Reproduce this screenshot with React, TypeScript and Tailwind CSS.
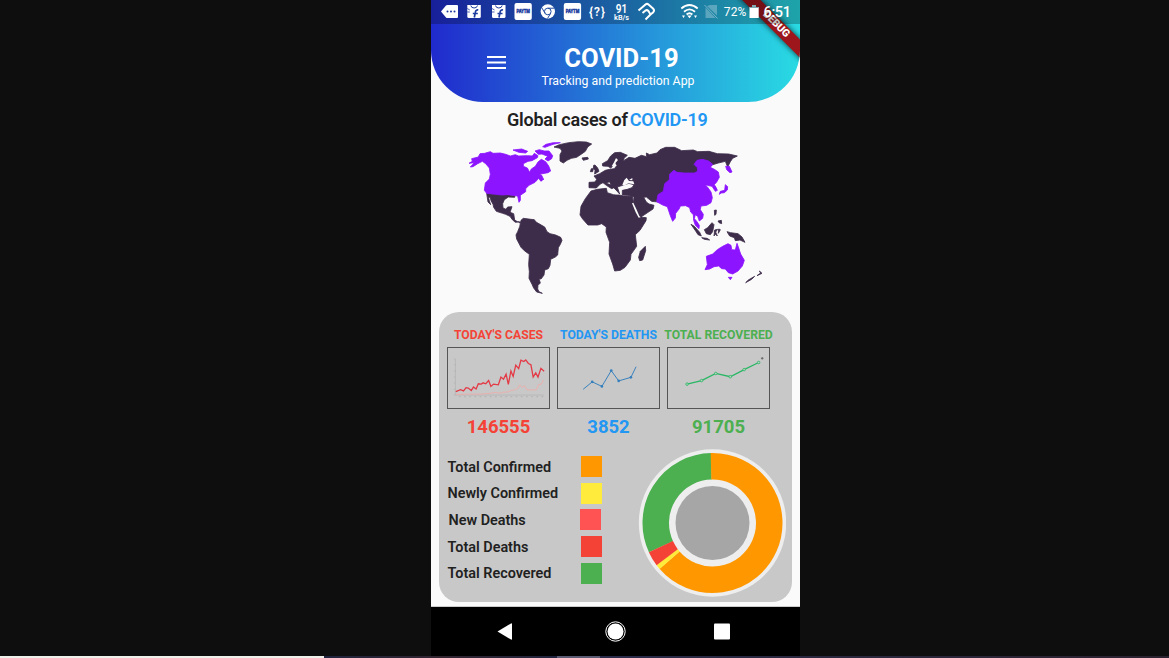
import React from "react";

const DARK = "#3d2c4a";
const PURPLE = "#8c14ff";

function StatusBar() {
  return (
    <div className="relative h-6 bg-black/25">
      <svg className="block h-6 w-[369px]" viewBox="431 0 369 24" fill="#fff">
        <path d="M441 11.500 446 5.500Q446.500 5 447.500 5H457Q458 5 458 6V17Q458 18 457 18H447.500Q446.500 18 446 17.500Z" />
        <g fill="#1d389c">
          <circle cx="447.500" cy="11.500" r="1" />
          <circle cx="451" cy="11.500" r="1" />
          <circle cx="454.500" cy="11.500" r="1" />
        </g>
        {[467.3, 492].map((x) => (
          <g key={x} transform={`translate(${x} 4)`}>
            <path d="M0 1H13.500V12.500Q13.500 14 12 14H1.500Q0 14 0 12.500Z" />
            <path d="M3.500 1.500Q4 4 6.800 4Q9.700 4 10.200 1.500" fill="none" stroke="#1d3c9d" strokeWidth="1" />
            <path d="M11 6Q8.500 5.500 8 8.500L7 13.500M5.500 9.500H10.500" fill="none" stroke="#1d3c9d" strokeWidth="1.700" />
            <path d="M0 4.500 2.500 6M0 8 2.500 8" stroke="#1d3c9d" strokeWidth=".8" />
          </g>
        ))}
        {[514.5, 563.8].map((x) => (
          <g key={x}>
            <rect x={x} y="3" width="17.300" height="17" rx="2" />
            <text x={x + 8.7} y="13.300" textAnchor="middle" fill="#1d3c9d" stroke="#1d3c9d" strokeWidth=".4" className="font-['Roboto'] text-[5px] font-black" textLength="13.500" lengthAdjust="spacingAndGlyphs">PAYTM</text>
          </g>
        ))}
        <circle cx="547.800" cy="11.500" r="7.200" />
        <g fill="none" stroke="#204aa0" strokeWidth="1">
          <circle cx="547.800" cy="11.500" r="3.300" />
          <path d="M547.800 8.200H554M545 13.200 541.600 7.500M550.700 13.200 547.500 18.500" />
        </g>
        <text x="597" y="16" textAnchor="middle" className="font-['Roboto'] text-[12px] font-semibold" textLength="16">{"{?}"}</text>
        <text x="621.600" y="12.500" textAnchor="middle" className="font-['Roboto'] text-[12px] font-semibold" textLength="11.500" lengthAdjust="spacingAndGlyphs">91</text>
        <text x="621.600" y="19.500" textAnchor="middle" className="font-['Roboto'] text-[7px] font-semibold" textLength="15" lengthAdjust="spacingAndGlyphs">kB/s</text>
        <path d="M638.500 10.500 645.500 4.500Q647 3.200 648.500 4.500L653 8.500Q655 10.500 653 12.500L650.500 14.500M642.500 13 645.500 10.500Q647 9.500 648.500 11L650.500 14.500 645.500 19.500" fill="none" stroke="#fff" strokeWidth="2" />
        <path d="M681.300 8.500Q689.500 1.500 697.700 8.500M684 11.700Q689.500 7 695 11.700M686.600 14.500Q689.500 12 692.400 14.500" fill="none" stroke="#fff" strokeWidth="1.800" />
        <path d="M687.300 15.500H691.700L689.500 18.300ZM682 15.500H685L683.500 18ZM694 15.500H697L695.500 18Z" />
        <path d="M707 6 710 5H717V15.500ZM705.500 7.500 715.500 18H705.500Z" opacity=".28" />
        <path d="M704.500 5 717.500 18.500" stroke="#fff" opacity=".4" />
        <text x="723.800" y="16" className="font-['Roboto'] text-[12px]" textLength="22.500">72%</text>
        <path d="M749.500 7H752V5H756V7H758.700V18H749.500Z" />
        <path d="M749.500 7H752V5H756V7H758.700V8H749.500Z" fill="#82a9b0" />
        <text x="763.500" y="17" className="font-['Roboto'] text-[14.500px] font-medium" textLength="27.500">6:51</text>
      </svg>
    </div>
  );
}

function DebugBanner() {
  return (
    <div className="absolute right-0 top-0 size-[70px] overflow-hidden">
      <div className="absolute left-[1px] top-[17.500px] flex h-[12.500px] w-[90px] rotate-45 items-center justify-center bg-[#9c161b] font-['Roboto'] text-[10.500px] font-black leading-none tracking-[-0.200px] text-white shadow-[0_0_5px_1px_rgba(0,0,0,0.55)]">
        DEBUG
      </div>
    </div>
  );
}

function WorldMap() {
  return (
    <svg className="ml-[29px] mt-[3px] block h-[165px] w-[310px] shrink-0" viewBox="0 0 930 495">
      <g strokeLinejoin="round" strokeWidth="2.500">
        <g fill={DARK} stroke={DARK}>
          <path d="M80 175 130 178 165 182 164 187 145 186 133 194 128 206 129 219 138 223 143 216 156 215 150 232 161 236 164 255 174 261 166 262 157 254 150 244 137 238 128 235 109 229 101 217 99 208 93 197 91 188 85 185 88 197 92 209 84 201Z" />
          <path d="M183 256 190 250 213 253 223 254 228 261 240 268 254 276 261 290 270 296 287 300 302 307 306 316 301 328 295 338 293 360 286 366 272 373 270 391 265 401 254 405 252 420 243 432 237 431 241 444 234 451 233 462 237 470 247 475 230 471 221 459 216 448 207 430 208 410 206 389 208 358 193 347 183 337 170 312 168 300 173 290 179 275Z" />
          <path d="M174 260 181 261 179 264Z" />
        </g>
        <g fill={PURPLE} stroke={PURPLE}>
          <path d="M27 85 37 79 35 71 55 66 60 56 74 55 91 50 99 55 121 54 137 58 151 63 166 59 176 63 202 62 217 63 223 55 234 62 232 68 216 77 204 79 190 86 190 94 202 99 209 112 214 102 226 94 234 81 244 73 257 80 266 93 272 108 264 113 238 118 245 121 249 130 243 139 236 130 225 142 207 151 197 161 197 170 181 181 181 196 177 202 173 183 144 179 125 180 80 175 73 166 76 144 88 132 91 118 88 99 77 86 67 79 53 86 39 95 31 96 43 83Z" />
          <path d="M159 45 185 42 203 49 197 54 177 52ZM225 48 238 44 253 48 267 48 278 62 275 71 264 78 255 72 263 64 246 57 235 58ZM248 35 258 28 280 23 301 23 279 28 255 37ZM242 132 252 132 243 138Z" />
        </g>
        <g transform="translate(255 0)" fill={DARK} stroke={DARK}>
          <path d="M27 36 43 29 71 23 100 20 124 21 140 27 128 36 121 49 111 56 95 67 79 70 66 76 55 84 45 78 45 59 51 48 45 40ZM111 69 128 67 130 72 115 76Z" />
          <path d="M150 90 158 99 162 109 149 117 150 106 145 100 146 91ZM139 101 145 101 143 110 136 110Z" />
          <path d="M132 142 150 141 155 133 147 123 164 116 181 106 194 103 208 101 216 91 211 85 204 93 197 99 189 94 173 93 172 86 188 77 197 63 209 53 226 52 247 61 237 70 236 77 252 67 270 70 289 61 305 65 304 54 314 59 336 54 345 44 362 37 389 37 410 47 445 45 458 50 492 49 517 56 551 57 577 63 563 70 556 80 548 96 541 79 520 84 500 90 453 150 402 185 348 202 320 199 304 186 296 187 304 201 312 207 327 211 324 222 309 232 288 246 281 239 276 227 265 208 267 185 247 181 232 180 232 166 247 163 261 158 267 149 251 145 233 151 217 156 224 177 213 165 202 154 193 140 184 145 200 150 207 158 200 161 184 151 174 143 166 147 154 159 132 158Z" />
          <path d="M138 168 157 163 184 160 187 173 205 179 213 180 223 180 236 183 262 184 265 202 275 224 283 242 292 247 304 248 303 257 285 286 271 299 275 334 258 358 256 375 240 397 226 406 209 408 203 387 192 357 194 322 183 292 184 276 170 266 158 270 129 270 113 252 105 240 108 214 121 191Z" />
          <path d="M301 334 302 347 293 375 284 377 281 367 286 349Z" />
        </g>
        <g fill="#fafafa">
          <path d="M487 149 493 135 500 128 507 138 520 139 523 148 505 145 492 152Z" />
          <path d="M455 94 462 82 468 69 474 75 467 83 465 96ZM507 135 517 129 517 136Z" />
          <path d="M516 205 520 203 530 224 538 243 542 247 536 248 527 232Z" />
        </g>
        <g transform="translate(540 0)">
          <g fill={PURPLE} stroke={PURPLE}>
            <path d="M50 200 54 179 70 169 74 146 88 134 89 117 102 106 111 112 132 114 163 114 173 109 172 98 162 88 171 76 187 73 206 78 218 88 211 97 223 103 235 111 238 127 230 141 223 149 228 157 232 166 226 169 216 154 202 151 196 150 203 157 213 171 217 188 213 203 200 211 183 213 181 224 190 238 188 250 178 258 173 244 166 239 163 251 170 259 178 271 177 281 166 271 161 256 160 239 152 231 149 218 137 212 121 213 118 221 107 235 106 249 98 259 91 242 82 215 68 210Z" />
            <path d="M257 94 268 94 276 111 270 113 260 104ZM238 178 241 169 254 166 256 149 263 155 262 165 253 173 244 174Z" />
            <path d="M195 404 202 389 199 364 218 357 232 344 248 334 264 326 273 331 275 344 286 345 291 325 298 345 302 357 313 376 307 393 294 408 278 417 265 413 256 402 245 401 236 393 222 395 209 402ZM265 427 276 427 271 434Z" />
          </g>
          <g fill={DARK} stroke={DARK}>
            <path d="M153 268 163 274 179 292 184 303 174 299 167 288ZM185 308 201 310 209 315 193 313ZM193 284 203 278 216 263 222 269 218 290 211 299 199 296ZM224 285 233 283 227 291 232 303 226 297 222 303ZM236 282 241 284 235 295ZM223 226 229 225 228 238 224 241ZM234 258 244 256 245 266 237 263ZM261 290 272 293 279 294 294 296 306 306 315 322 300 315 286 317 283 308 269 303ZM358 408 366 415 351 422 362 414ZM344 424 335 433 317 443 325 435Z" />
          </g>
        </g>
      </g>
    </svg>
  );
}

function CasesChart() {
  return (
    <svg className="block size-full" viewBox="0 0 309 186" fill="none">
      <path d="M21 34V146H295M16 34H21M16 52H21M16 71H21M16 90H21M16 109H21M16 128H21M16 146H21" stroke="#aaa" strokeWidth="1.500" />
      <path d="M32 151H293" stroke="#b0b0b0" strokeWidth="3" strokeDasharray="5 11" />
      <path d="M22 144 60 143 100 143 130 140 145 138 160 140 170 137 184 136 195 131 203 131 207 128 214 127 220 114 228 122 235 117 243 130 272 130 279 113 286 113 294 99" stroke="#f0aaa7" strokeWidth="2.500" />
      <path d="M22 135 37 129 46 133 54 123 61 124 70 132 77 121 85 127 92 111 101 112 107 108 115 111 124 101 131 119 139 112 154 114 162 90 170 97 178 81 185 113 193 71 200 88 208 53 217 64 224 38 233 42 239 37 247 48 255 52 262 90 270 77 277 90 286 63 296 72" stroke="#e33a46" strokeWidth="4" />
    </svg>
  );
}

function DeathsChart() {
  const points = [[76, 128], [104, 105], [134, 119], [163, 70], [186, 102], [224, 91], [240, 58]];
  return (
    <svg className="block size-full" viewBox="0 0 309 186" fill="none">
      <polyline points={points.join(" ")} stroke="#337ebd" strokeWidth="3" />
      {points.slice(1, 6).map(([x, y]) => <circle key={x} cx={x} cy={y} r="4" fill="#337ebd" />)}
    </svg>
  );
}

function RecoveredChart() {
  const points = [[57, 112], [102, 101], [146, 79], [191, 89], [234, 67], [279, 45]];
  return (
    <svg className="block size-full" viewBox="0 0 309 186" fill="none">
      <polyline points={points.join(" ")} stroke="#29b765" strokeWidth="4" />
      {points.map(([x, y]) => <circle key={x} cx={x} cy={y} r="4" fill="#bacfc0" stroke="#29b765" strokeWidth="2.500" />)}
      <path d="M286 32H294M290 28V36" stroke="#666" strokeWidth="3" />
    </svg>
  );
}

interface StatProps {
  title: string;
  value: string;
  color: string;
  chart: React.ReactNode;
}

function Stat({ title, value, color, chart }: StatProps) {
  return (
    <div className={`flex w-[103px] flex-col items-center ${color}`}>
      <div className="h-[20px] whitespace-nowrap text-[12.200px] font-bold leading-[22px]">{title}</div>
      <div className="mt-[3px] h-[62px] w-[103px] border border-[#555]">{chart}</div>
      <div className="mt-[6px] text-[18.500px] font-bold leading-[24px]">{value}</div>
    </div>
  );
}

const legend = [
  { label: "Total Confirmed", color: "bg-[#ff9800]", inset: "", gap: "" },
  { label: "Newly Confirmed", color: "bg-[#ffeb3b]", inset: "", gap: "" },
  { label: "New Deaths", color: "bg-[#ff5252]", inset: "pl-px", gap: "-ml-px" },
  { label: "Total Deaths", color: "bg-[#f44336]", inset: "", gap: "" },
  { label: "Total Recovered", color: "bg-[#4caf50]", inset: "", gap: "" },
];

const slices = [
  { color: "#4caf50", from: 245.2, to: 359 },
  { color: "#ff9800", from: 358.5, to: 589.2 },
  { color: "#ffeb3b", from: 229, to: 233.2 },
  { color: "#f44336", from: 233, to: 245.4 },
];

function arc(from: number, to: number) {
  const r = 56.75;
  const at = (deg: number) => {
    const a = (deg * Math.PI) / 180;
    return `${(r * Math.sin(a)).toFixed(2)} ${(-r * Math.cos(a)).toFixed(2)}`;
  };
  return `M${at(from)}A${r} ${r} 0 ${to - from > 180 ? 1 : 0} 1 ${at(to)}`;
}

function Donut() {
  return (
    <svg className="block size-[148px]" viewBox="-74.500 -74 148 148">
      <circle r="73.700" fill="#eee" />
      {slices.map((s) => (
        <path key={s.color} d={arc(s.from, s.to)} fill="none" stroke={s.color} strokeWidth="26.500" />
      ))}
      <circle r="37" fill="#a6a6a6" />
    </svg>
  );
}

export default function App() {
  return (
    <div className="flex h-[658px] w-[1169px] flex-col overflow-hidden bg-[#0e0e0e] font-['Roboto',sans-serif]">
      <div className="ml-[431px] flex h-[656px] w-[369px] flex-col bg-[#fafafa]">
        <header className="relative h-[101.500px] shrink-0 overflow-hidden rounded-b-[52px] bg-linear-to-r/srgb from-[#202acd] to-[#29dbe3] text-white">
          <DebugBanner />
          <StatusBar />
          <div className="flex pl-[56px]">
            <svg className="mt-[32px] h-[13px] w-[19px]" viewBox="0 0 19 13">
              <path d="M0 1H19M0 6.500H19M0 12H19" stroke="#fff" strokeWidth="2" />
            </svg>
            <div className="ml-[33px] mt-[19px] flex w-[158px] flex-col items-center whitespace-nowrap">
              <h1 className="pl-[7px] text-[25.600px] font-bold leading-[31px]">COVID-19</h1>
              <p className="text-[12.300px] leading-[14px]">Tracking and prediction App</p>
            </div>
          </div>
        </header>

        <h2 className="ml-[76px] mt-[5px] h-[25.500px] whitespace-nowrap text-[18px] font-semibold leading-[25px] text-[#212121]">
          <span className="tracking-[-0.250px]">Global cases of</span>
          <span className="ml-[2px] tracking-[-0.220px] text-[#2196f3]">COVID-19</span>
        </h2>

        <WorldMap />

        <section className="mx-2 mt-[12px] h-[290px] shrink-0 rounded-[20px] bg-[#c8c8c8]">
          <div className="flex gap-[7px] pl-[8px] pt-[12px]">
            <Stat title="TODAY'S CASES" value="146555" color="text-[#f44336]" chart={<CasesChart />} />
            <Stat title="TODAY'S DEATHS" value="3852" color="text-[#2196f3]" chart={<DeathsChart />} />
            <Stat title="TOTAL RECOVERED" value="91705" color="text-[#4caf50]" chart={<RecoveredChart />} />
          </div>
          <div className="flex">
            <ul className="ml-[8.500px] mt-[17px] flex w-[190.500px] flex-col gap-[5.700px]">
              {legend.map((item) => (
                <li key={item.label} className="flex h-[21px] items-center">
                  <span className={`w-[133.500px] whitespace-nowrap pt-[2px] text-[14.400px] font-semibold leading-[20px] text-[#212121] ${item.inset}`}>{item.label}</span>
                  <span className={`size-[21px] ${item.color} ${item.gap}`} />
                </li>
              ))}
            </ul>
            <div className="mt-[10px]">
              <Donut />
            </div>
          </div>
        </section>

        <nav className="mt-auto h-[50px] shrink-0 border-t border-[#ccc] bg-black">
          <svg className="block h-[49px] w-[369px]" viewBox="0 0 369 49" fill="#fff">
            <path d="M66.500 24.500 80 16.500Q81 16 81 17V32Q81 33 80 32.500Z" />
            <circle cx="184.500" cy="24.500" r="8" />
            <circle cx="184.500" cy="24.500" r="9.700" fill="none" stroke="#fff" strokeWidth="1" />
            <rect x="283" y="16.500" width="16" height="16" rx="1" />
          </svg>
        </nav>
      </div>
      <div className="flex h-[2px] w-full">
        <div className="w-[324px] bg-[#efefea]" />
        <div className="w-[233px] bg-linear-to-r from-[#20243e] via-[#322530] to-[#20243e]" />
        <div className="w-[43px] bg-[#5b5c73]" />
        <div className="flex-1 bg-linear-to-r from-[#292b49] to-[#2c2330]" />
      </div>
    </div>
  );
}
